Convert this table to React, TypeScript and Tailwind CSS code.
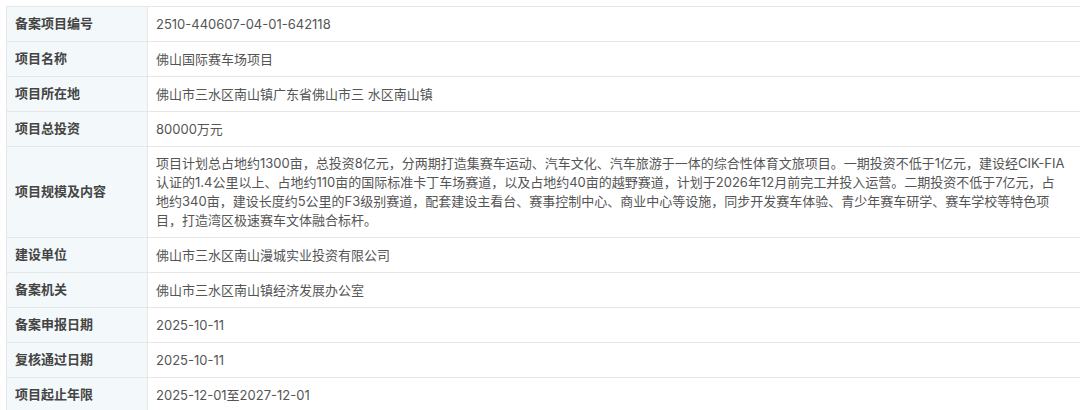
import React from 'react';

interface Row {
    label: string;
    lines: string[];
}

const rows: Row[] = [
    { label: "备案项目编号", lines: ["2510-440607-04-01-642118"] },
    { label: "项目名称", lines: ["佛山国际赛车场项目"] },
    { label: "项目所在地", lines: ["佛山市三水区南山镇广东省佛山市三 水区南山镇"] },
    { label: "项目总投资", lines: ["80000万元"] },
    {
        label: "项目规模及内容",
        lines: [
            "项目计划总占地约1300亩，总投资8亿元，分两期打造集赛车运动、汽车文化、汽车旅游于一体的综合性体育文旅项目。一期投资不低于1亿元，建设经CIK-FIA",
            "认证的1.4公里以上、占地约110亩的国际标准卡丁车场赛道，以及占地约40亩的越野赛道，计划于2026年12月前完工并投入运营。二期投资不低于7亿元，占",
            "地约340亩，建设长度约5公里的F3级别赛道，配套建设主看台、赛事控制中心、商业中心等设施，同步开发赛车体验、青少年赛车研学、赛车学校等特色项",
            "目，打造湾区极速赛车文体融合标杆。"
        ]
    },
    { label: "建设单位", lines: ["佛山市三水区南山漫城实业投资有限公司"] },
    { label: "备案机关", lines: ["佛山市三水区南山镇经济发展办公室"] },
    { label: "备案申报日期", lines: ["2025-10-11"] },
    { label: "复核通过日期", lines: ["2025-10-11"] },
    { label: "项目起止年限", lines: ["2025-12-01至2027-12-01"] },
];

export default function App() {
    return (
        <div
            className="w-[1080px] h-[410px] overflow-hidden bg-white pt-[6px] pl-[6px]"
            style={{ fontFamily: 'Inter, "Noto Sans CJK SC", sans-serif' }}
        >
            <div className="w-[1090px] border-t border-[#e6e6e6]">
                {rows.map((row, idx) => {
                    const multi = row.lines.length > 1;
                    return (
                        <div key={idx} className="flex border-b border-l border-[#e6e6e6]">
                            {/* label cell */}
                            <div className="w-[141px] shrink-0 flex items-center bg-[#f3f9fa] border-r border-[#e6e6e6] pl-[8px] text-[13px] font-bold text-[#444]">
                                {row.label}
                            </div>
                            {/* value cell */}
                            <div
                                className={`flex-1 pl-[8px] text-[13px] text-[#555] whitespace-nowrap ${multi ? "py-[7px] leading-[19px]" : "py-[8px] leading-[18px]"}`}
                            >
                                {row.lines.map((line, i) => (
                                    <div key={i}>{line}</div>
                                ))}
                            </div>
                        </div>
                    );
                })}
            </div>
        </div>
    );
}
